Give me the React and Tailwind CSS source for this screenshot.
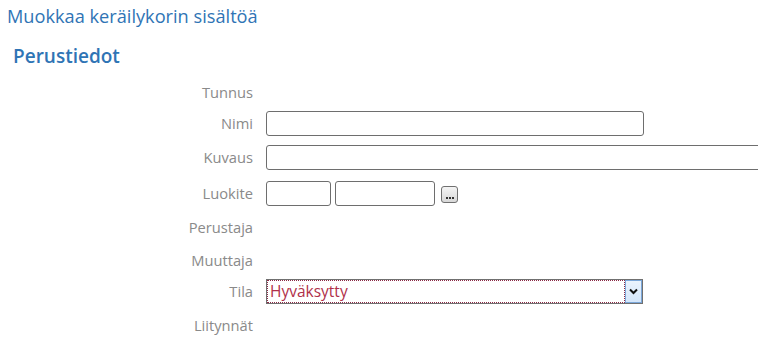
import React from 'react';

const labelCls = 'w-[253px] shrink-0 text-right text-[14.7px] text-[#8a8a8a]';
const inputCls = 'h-[25px] rounded-[3px] border border-[#6e6e6e] bg-white';

function Row({ h, label, children }) {
    return (
        <div className={`flex items-center gap-[13px] ${h}`}>
            <div className={labelCls}>{label}</div>
            {children}
        </div>
    );
}

export default function App() {
    return (
        <div
            className="w-[758px] h-[344px] overflow-hidden bg-white"
            style={{ fontFamily: '"Open Sans", "Noto Sans", sans-serif' }}
        >
            <div className="pl-[7px] pt-[3px] h-[42px] text-[18.2px] text-[#2f74b5]">
                Muokkaa keräilykorin sisältöä
            </div>
            <div className="pl-[13px] h-[35px] text-[19px] font-semibold text-[#2f74b5]">
                Perustiedot
            </div>

            <Row h="h-[30px]" label="Tunnus" />
            <Row h="h-[33px]" label="Nimi">
                <div className={`${inputCls} w-[378px]`} />
            </Row>
            <Row h="h-[35px]" label="Kuvaus">
                <div className={`${inputCls} w-[520px] shrink-0`} />
            </Row>
            <Row h="h-[36px]" label="Luokite">
                <div className="flex items-center gap-[4px]">
                    <div className={`${inputCls} w-[65px]`} />
                    <div className={`${inputCls} w-[100px]`} />
                    <button className="ml-[2px] mt-[3px] w-[17px] h-[17px] rounded-[3px] border border-[#707070] bg-gradient-to-b from-[#f4f4f4] to-[#d8d8d8] flex items-end justify-center pb-[3px]">
                        <span className="flex gap-[1px]">
                            <span className="w-[2px] h-[2px] bg-[#333]" />
                            <span className="w-[2px] h-[2px] bg-[#333]" />
                            <span className="w-[2px] h-[2px] bg-[#333]" />
                        </span>
                    </button>
                </div>
            </Row>
            <Row h="h-[33px]" label="Perustaja" />
            <Row h="h-[32px]" label="Muuttaja" />
            <Row h="h-[31px]" label="Tila">
                <div className="relative h-[25px] w-[377px] border border-[#707070] bg-white">
                    <div className="absolute inset-0 right-[17px] border border-dotted border-[#8b2a46] flex items-center pl-[2px] text-[15.5px] text-[#b0304a]">
                        Hyväksytty
                    </div>
                    <div className="absolute right-0 top-0 bottom-0 w-[17px] border border-[#7ba7d9] bg-gradient-to-b from-[#eaf3fd] to-[#d4e6fa] flex items-center justify-center">
                        <svg width="9" height="7" viewBox="0 0 9 7">
                            <path d="M1 1.5 L4.5 5 L8 1.5" fill="none" stroke="#111" strokeWidth="2" />
                        </svg>
                    </div>
                </div>
            </Row>
            <Row h="h-[36px]" label="Liitynnät" />
        </div>
    );
}
